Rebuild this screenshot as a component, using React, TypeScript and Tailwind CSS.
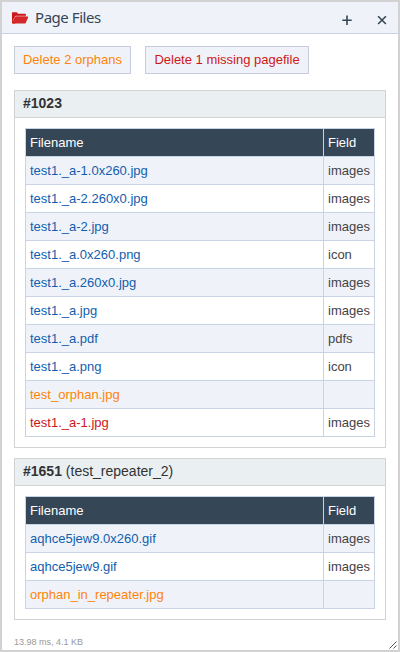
import React from "react";

type Row = { name: string; field: string; tone?: "orphan" | "missing" };

const pageRows: Row[] = [
  { name: "test1._a-1.0x260.jpg", field: "images" },
  { name: "test1._a-2.260x0.jpg", field: "images" },
  { name: "test1._a-2.jpg", field: "images" },
  { name: "test1._a.0x260.png", field: "icon" },
  { name: "test1._a.260x0.jpg", field: "images" },
  { name: "test1._a.jpg", field: "images" },
  { name: "test1._a.pdf", field: "pdfs" },
  { name: "test1._a.png", field: "icon" },
  { name: "test_orphan.jpg", field: "", tone: "orphan" },
  { name: "test1._a-1.jpg", field: "images", tone: "missing" },
];

const repeaterRows: Row[] = [
  { name: "aqhce5jew9.0x260.gif", field: "images" },
  { name: "aqhce5jew9.gif", field: "images" },
  { name: "orphan_in_repeater.jpg", field: "", tone: "orphan" },
];

const toneClass = {
  link: "text-[#125eae]",
  orphan: "text-[#ff8309]",
  missing: "text-[#cd1818]",
};

function FolderIcon() {
  return (
    <svg width="17" height="12" viewBox="0 0 17 12" className="shrink-0">
      <path d="M0 11V.7Q0 .3 .5 .3H4.6L6.2 1.8H13.2Q13.9 1.8 13.9 2.5V4.2L3 11.6H.6Q0 11.6 0 11Z" fill="#cd1818" />
      <path d="M4 3.8H14.4V4.8H3.2L.8 9.6V8.4L2.9 4.4Q3.2 3.8 4 3.8Z" fill="#f0c4c8" />
      <path d="M4.2 4.6H15.7Q16.5 4.6 16.1 5.4L13.7 10.9Q13.4 11.6 12.7 11.6H.7Z" fill="#d3282a" />
    </svg>
  );
}

function FileTable({ rows }: { rows: Row[] }) {
  return (
    <table className="w-full table-fixed border-collapse text-left text-[13px] leading-[19px]">
      <colgroup>
        <col className="w-[298px]" />
        <col />
      </colgroup>
      <thead>
        <tr className="h-7 bg-[#354656] text-white">
          <th className="border border-[#c8d3e4] px-1 py-0 font-normal">Filename</th>
          <th className="border border-[#c8d3e4] px-1 py-0 font-normal">Field</th>
        </tr>
      </thead>
      <tbody>
        {rows.map((row) => (
          <tr key={row.name} className="h-7 odd:bg-[#eff3f9]">
            <td className={`border border-[#c8d3e4] px-1 py-0 ${toneClass[row.tone ?? "link"]}`}>
              {row.name}
            </td>
            <td className="border border-[#c8d3e4] px-1 py-0 text-[#444]">{row.field}</td>
          </tr>
        ))}
      </tbody>
    </table>
  );
}

function Panel({ id, note, rows }: { id: string; note?: string; rows: Row[] }) {
  return (
    <section className="border border-[#d2d2d2]">
      <h2 className="h-[27px] border-b border-[#d2d2d2] bg-[#eaeff2] pl-2 text-[14px] leading-[25px] text-[#333]">
        <b>{id}</b>
        {note && ` ${note}`}
      </h2>
      <div className="p-2.5">
        <FileTable rows={rows} />
      </div>
    </section>
  );
}

export default function App() {
  return (
    <main className="flex h-[652px] w-[400px] flex-col overflow-hidden border-2 border-[#d2d2d2] bg-white font-['Liberation_Sans',Arial,sans-serif]">
      <header className="flex h-8 shrink-0 items-center border-b border-[#c8d3e4] bg-[#eff3f9] pl-2.5 pr-[11px] text-[#354656]">
        <FolderIcon />
        <h1 className="-mt-0.5 ml-1.5 flex-1 font-['Noto_Sans',sans-serif] text-[15px] leading-[20px] tracking-[-0.45px]">
          Page Files
        </h1>
        <svg
          width="45"
          height="10"
          viewBox="0 0 45 10"
          className="mt-[5px]"
          fill="none"
          stroke="#354656"
          strokeWidth="1.6"
        >
          <path d="M.3 5.2H9.7M5 .5V9.9M36.1 1.2L43.9 9M43.9 1.2L36.1 9" />
        </svg>
      </header>

      <div className="flex flex-1 flex-col pl-3 pr-3 pt-3">
        <div className="flex gap-[14px] text-[13px] leading-[26px]">
          <button className="h-7 w-[117px] whitespace-nowrap border border-[#c4cdd9] bg-[#eff3f9] text-[#ff8309]">
            Delete 2 orphans
          </button>
          <button className="h-7 w-[164px] whitespace-nowrap border border-[#c4cdd9] bg-[#eff3f9] text-[#cd1818]">
            Delete 1 missing pagefile
          </button>
        </div>
        <div className="mt-4 flex flex-col gap-2.5">
          <Panel id="#1023" rows={pageRows} />
          <Panel id="#1651" note="(test_repeater_2)" rows={repeaterRows} />
        </div>
        <footer className="mt-auto flex h-[14px] items-start justify-between text-[9px] leading-[12px] text-[#999]">
          <span>13.98 ms, 4.1 KB</span>
          <svg width="8" height="8" viewBox="0 0 8 8" className="-mr-[11px] mt-[5px]">
            <path d="M.5 7.5L7.5 .5M4.5 7.5L7.5 4.5" stroke="#555" strokeWidth="1" />
          </svg>
        </footer>
      </div>
    </main>
  );
}
